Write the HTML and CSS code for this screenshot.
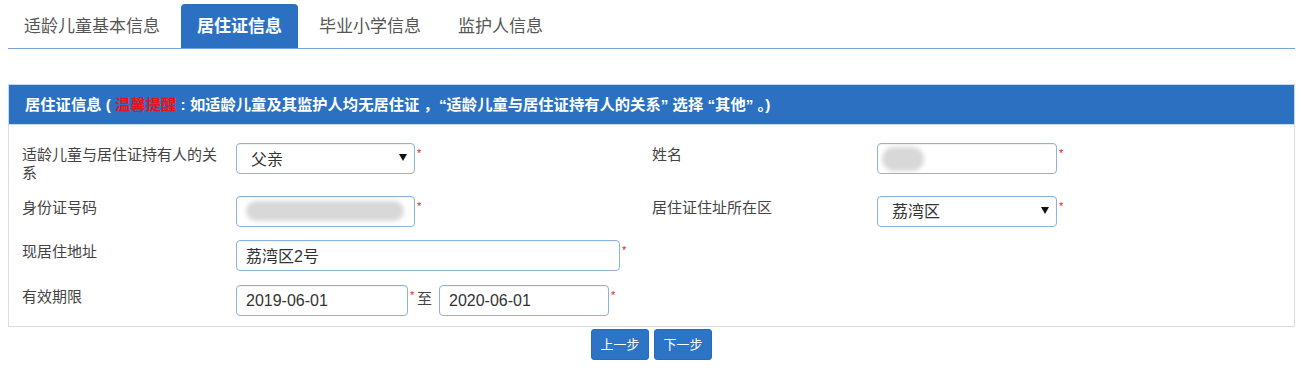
FILE: index.html
```html
<!DOCTYPE html>
<html lang="zh-CN">
<head>
<meta charset="utf-8">
<title>居住证信息</title>
<link rel="stylesheet" href="styles.css">
</head>
<body>
<div class="page">
  <ul class="tabs">
    <li class="tab">适龄儿童基本信息</li>
    <li class="tab active">居住证信息</li>
    <li class="tab">毕业小学信息</li>
    <li class="tab">监护人信息</li>
  </ul>

  <div class="panel">
    <div class="panel-heading">居住证信息 ( <span class="warn">温馨提醒</span> : 如适龄儿童及其监护人均无居住证 ，“适龄儿童与居住证持有人的关系” 选择 “其他” 。)</div>
    <div class="panel-body">
      <div class="row row-tall">
        <div class="label">适龄儿童与居住证持有人的关系</div>
        <div class="field">
          <div class="control select w179"><span>父亲</span><svg class="caret" width="8" height="7" viewBox="0 0 8 7"><path d="M0 0H8L4 7Z" fill="#111"/></svg></div><span class="req">*</span>
        </div>
        <div class="label">姓名</div>
        <div class="field">
          <div class="control w180"><span class="blur blur-name"></span></div><span class="req">*</span>
        </div>
      </div>
      <div class="row">
        <div class="label">身份证号码</div>
        <div class="field">
          <div class="control w179"><span class="blur blur-id"></span></div><span class="req">*</span>
        </div>
        <div class="label">居住证住址所在区</div>
        <div class="field">
          <div class="control select w180"><span>荔湾区</span><svg class="caret" width="8" height="7" viewBox="0 0 8 7"><path d="M0 0H8L4 7Z" fill="#111"/></svg></div><span class="req">*</span>
        </div>
      </div>
      <div class="row">
        <div class="label">现居住地址</div>
        <div class="field">
          <div class="control w384"><span>荔湾区2号</span></div><span class="req">*</span>
        </div>
      </div>
      <div class="row">
        <div class="label">有效期限</div>
        <div class="field">
          <div class="control w172"><span>2019-06-01</span></div><span class="req">*</span><span class="to">至</span><div class="control w171"><span>2020-06-01</span></div><span class="req">*</span>
        </div>
      </div>
    </div>
  </div>

  <div class="actions">
    <button class="btn">上一步</button>
    <button class="btn">下一步</button>
  </div>
</div>
</body>
</html>
```

FILE: styles.css
```css
* { box-sizing: border-box; }
html, body { margin: 0; padding: 0; background: #fff; }
body {
  font-family: "Liberation Sans", "Noto Sans CJK SC", sans-serif;
  color: #333;
}
.page { padding: 4px 8px 0; }

.tabs {
  list-style: none;
  margin: 0;
  padding: 0;
  display: flex;
  border-bottom: 1px solid #74a4db;
}
.tab {
  font-size: 17px;
  line-height: 23px;
  padding: 10px 15px;
  border: 1px solid transparent;
  border-bottom: none;
  margin-right: 5px;
  color: #555;
  border-radius: 4px 4px 0 0;
  white-space: nowrap;
}
.tab.active {
  background: #2c71c1;
  color: #fff;
  font-weight: bold;
}

.panel {
  margin-top: 35px;
  border: 1px solid #dcdcdc;
  border-top: none;
}
.panel-heading {
  background: #2c71c1;
  border: 1px solid #c6daf0;
  margin: 0 -1px;
  color: #fff;
  font-weight: bold;
  font-size: 15.3px;
  line-height: 21px;
  padding: 9px 16px 9px 16px;
  height: 41px;
  white-space: nowrap;
}
.warn { color: #e8141b; }

.panel-body {
  padding: 18px 0 10px 13px;
  display: flex;
  flex-direction: column;
  gap: 13.5px;
}
.row {
  display: grid;
  grid-template-columns: 214px 416px 225px 1fr;
  align-items: start;
}
.row-tall { min-height: 39px; }
.label {
  font-size: 15px;
  line-height: 18px;
  padding-top: 3px;
  color: #444;
  padding-right: 18px;
}
.field {
  display: flex;
  align-items: flex-start;
}
.control {
  height: 31px;
  border: 1px solid #8db2de;
  border-radius: 4px;
  box-shadow: inset 0 1px 1px rgba(0,0,0,.06);
  display: flex;
  align-items: center;
  padding: 0 9px;
  font-size: 16px;
  color: #333;
  background: #fff;
  overflow: hidden;
}
.control span { line-height: 20px; padding-top: 2px; }
.select {
  justify-content: space-between;
  padding: 0 7px 0 14px;
}
.caret { margin-top: -2px; }
.w179 { width: 179px; }
.w180 { width: 180px; }
.w384 { width: 384px; }
.w172 { width: 172px; }
.w171 { width: 170px; }
.req {
  color: #e8141b;
  font-size: 11px;
  line-height: 12px;
  margin: 4px 0 0 2px;
  width: 6px;
}
.to {
  font-size: 15px;
  line-height: 20px;
  margin: 4px 7px 0 1px;
  color: #444;
}
.blur {
  display: block;
  background: #d8d8d8;
  filter: blur(2px);
  border-radius: 12px;
}
.blur-id { width: 158px; height: 20px; margin-left: 0; }
.blur-name { width: 42px; height: 24px; margin-left: -5px; border-radius: 14px; }

.actions {
  display: flex;
  justify-content: center;
  gap: 5px;
  margin-top: 2px;
}
.btn {
  font-family: "Liberation Sans", "Noto Sans CJK SC", sans-serif;
  font-size: 13px;
  line-height: 19px;
  padding: 0;
  height: 31px;
  width: 58px;
  white-space: nowrap;
  background: #2c74c6;
  color: #fff;
  border: 1px solid #2a6bb8;
  border-radius: 3px;
}
```
